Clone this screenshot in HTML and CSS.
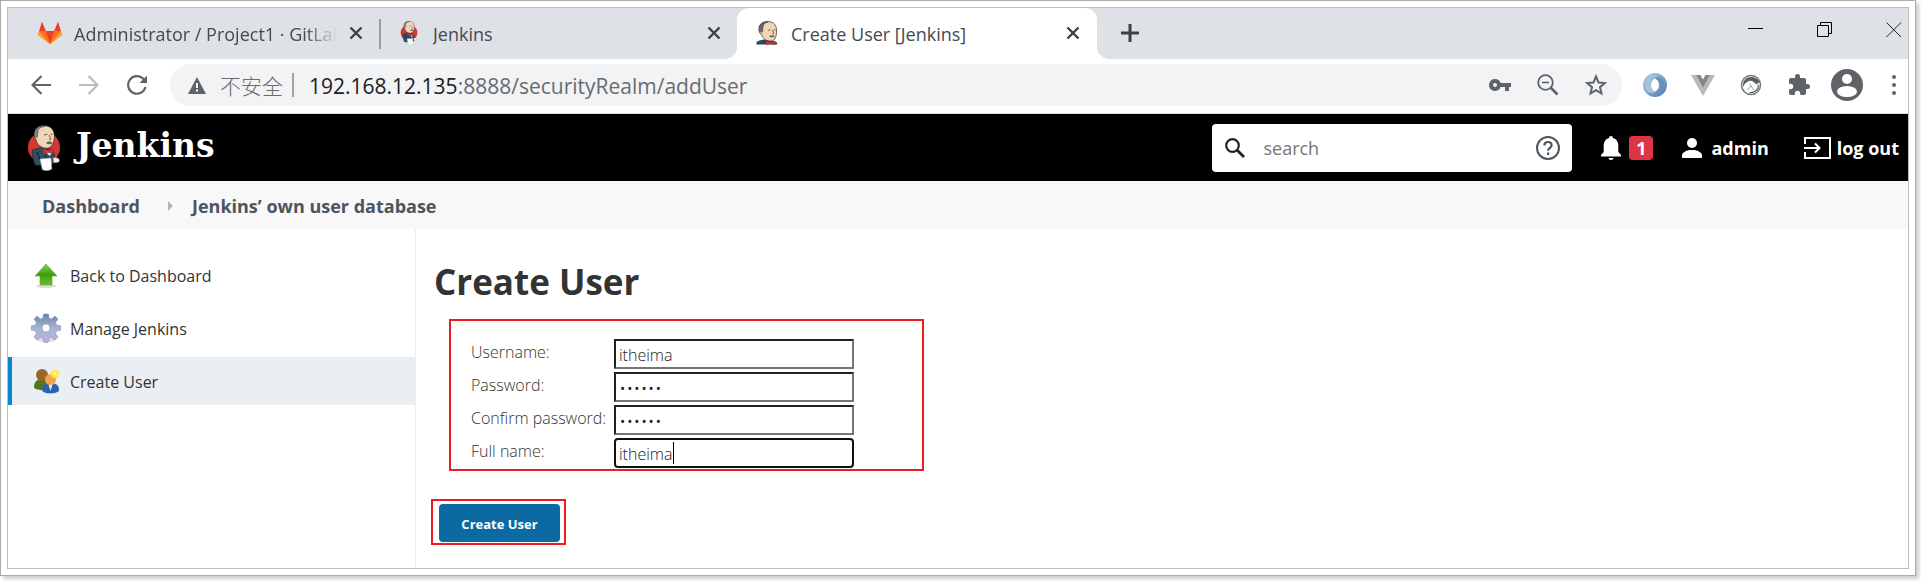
FILE: index.html
```html
<!DOCTYPE html>
<html lang="en">
<head>
<meta charset="utf-8">
<title>Create User [Jenkins]</title>
<link rel="stylesheet" href="styles.css">
</head>
<body>
<svg class="defs" aria-hidden="true">
  <defs>
    <symbol id="butler-head" viewBox="0 0 22 24">
      <path d="M0.500 23.500V21l3-1.500 4-1 8 1 5 1.500 1 2.500z" fill="#24485c"/>
      <path d="M4 11C2 4 5 .8 12 .6c6 0 9 4 8.600 10.400-.2 4.500-1.600 8.500-5.100 9C11 20.400 7 18 5.500 13.500z" fill="#f0d6b7" stroke="#463f3d" stroke-width=".8"/>
      <path d="M5 13C2.500 11 2 7 4.200 4 6 1.500 9 .8 12 .9 8.500 1.600 7.200 3.500 7 6L6.500 10z" fill="#696467" stroke="#3a3536" stroke-width=".6"/>
      <path d="M5.500 10.500c-2-.5-2 2.500 0 3.300" fill="#f0d6b7" stroke="#463f3d" stroke-width=".6"/>
      <path d="M12 9.300l2.500-.4M18 8.800l1.600.2M16.500 9l1.300 3.500-1.500.5" fill="none" stroke="#51443d" stroke-width=".8"/>
      <path d="M13 15.500c1.800-1.600 4-1.600 6-.4-1.500 1.400-3.500 1.800-6 .4z" fill="#6f6055"/>
      <path d="M10 20l4 1.200L18.500 20v3.800l-4-1-4.500 1z" fill="#d33833" stroke="#8d1e20" stroke-width=".4"/>
    </symbol>
    <symbol id="butler" viewBox="0 0 32 46">
      <ellipse cx="16" cy="22.500" rx="16" ry="15.500" fill="#d33833"/>
      <path d="M7 40C5 34 3.500 28 4.500 25l8-2.500 11 2 3 4-1 10-11 2z" fill="#2e4f62" stroke="#12232e" stroke-width=".6"/>
      <path d="M7 12C5.500 5 9.500 .8 16.500 .8c7 0 10.400 5 9.800 12-.3 6-3 10-7.500 10.400C13 23.500 9 19 8 15z" fill="#f0d6b7" stroke="#382f2d" stroke-width=".7"/>
      <path d="M8 14C5 11 6 4 10 2c2.500-1.300 5-1.400 7-.8-4.500.6-7 2.500-7.200 5.500L9.500 11z" fill="#85858a" stroke="#353235" stroke-width=".6"/>
      <path d="M8.500 11.500c-2-.4-1.500 3.600.4 4.300" fill="#f0d6b7" stroke="#382f2d" stroke-width=".6"/>
      <path d="M16 10l3.500-.8M22.500 9.200l2 .2M21 10l2 4-1.800.7" fill="none" stroke="#4b403b" stroke-width=".8"/>
      <path d="M18 18c1.600-2 5-2 6.800 0-1.500 1.600-4.800 2-6.800 0z" fill="#6c5c51"/>
      <path d="M18 27l3.500 4 2.500-3z" fill="#dce5e9"/>
      <path d="M15 23.500l5.500 2 4.500-2 .4 5-4.900-1.200L15.500 29z" fill="#d33833" stroke="#941b20" stroke-width=".5"/>
      <path d="M16 30l6 5M9 27l3 8" fill="none" stroke="#0e202b" stroke-width="1"/>
      <path d="M12 34l11-1 .8 11c-3 2-7.500 2-9.500.5z" fill="#fff" stroke="#9aa5aa" stroke-width=".5"/>
      <path d="M25 33c3-1 6 0 6.500 2 .4 2-2 3.500-6 2.500z" fill="#f2efed" stroke="#6b6461" stroke-width=".5"/>
    </symbol>
    <symbol id="close" viewBox="0 0 14 14"><path d="M1.500 1.500l11 11M12.500 1.500l-11 11" fill="none" stroke="#3c4043" stroke-width="2.400"/></symbol>
    <linearGradient id="green" x1="0" y1="0" x2="0" y2="1"><stop offset="0" stop-color="#8fd05c"/><stop offset=".5" stop-color="#3f9d0a"/><stop offset="1" stop-color="#67bf2b"/></linearGradient>
    <linearGradient id="gear" x1="0" y1="0" x2="0" y2="1"><stop offset="0" stop-color="#6683ad"/><stop offset=".5" stop-color="#a9b3d3"/><stop offset="1" stop-color="#b7b3d4"/></linearGradient>
    <linearGradient id="ring" x1="0" y1="0" x2="1" y2="1"><stop offset="0" stop-color="#b6cce4"/><stop offset="1" stop-color="#4a7db0"/></linearGradient>
    <radialGradient id="glow"><stop offset="0" stop-color="#fffbb0"/><stop offset=".5" stop-color="#ffe92e"/><stop offset="1" stop-color="#ffe92e" stop-opacity="0"/></radialGradient>
  </defs>
</svg>
<div class="frame">
  <div class="window">
    <div class="tabs">
      <div class="tab tab-first">
        <svg class="favicon" viewBox="0 0 24 22"><path d="M12 22L0 13 4 0l4 9h8l4-9 4 13z" fill="#fc6d26"/><path d="M12 22L7.500 9h9z" fill="#e24329"/><path d="M4 0l3.500 9H1.200zM20 0l-3.500 9h6.300z" fill="#e24329"/><path d="M1.200 9L0 13l12 9zM22.800 9L24 13l-12 9z" fill="#fca326"/><path d="M1.200 9h6.300L12 22zM22.800 9h-6.300L12 22z" fill="#fc6d26"/></svg>
        <span class="tab-title fade">Administrator / Project1 · GitLab</span>
        <button class="icon-btn" aria-label="Close tab"><svg class="s14"><use href="#close"/></svg></button>
      </div>
      <div class="tab tab-second">
        <svg class="favicon"><use href="#butler"/></svg>
        <span class="tab-title">Jenkins</span>
        <button class="icon-btn" aria-label="Close tab"><svg class="s14"><use href="#close"/></svg></button>
      </div>
      <div class="tab tab-active">
        <svg class="favicon"><use href="#butler-head"/></svg>
        <span class="tab-title">Create User [Jenkins]</span>
        <button class="icon-btn" aria-label="Close tab"><svg class="s14"><use href="#close"/></svg></button>
      </div>
      <button class="icon-btn new-tab" aria-label="New tab"><svg class="s18" viewBox="0 0 18 18"><path d="M9 0v18M0 9h18" stroke="#3c4043" stroke-width="3"/></svg></button>
      <div class="controls">
        <button class="icon-btn" aria-label="Minimize"><svg class="s16" viewBox="0 0 16 16"><path d="M0 6.500h15" stroke="#000"/></svg></button>
        <button class="icon-btn" aria-label="Restore"><svg class="s16" viewBox="0 0 16 16"><path d="M.5 3.500h11v11H.5zM3.500 3.500v-3h11v11h-3" fill="none" stroke="#000"/></svg></button>
        <button class="icon-btn" aria-label="Close window"><svg class="s16" viewBox="0 0 16 16"><path d="M.5.5l14.500 14.500M15 .5L.5 15" stroke="#222"/></svg></button>
      </div>
    </div>

    <div class="toolbar">
      <div class="nav">
        <button class="icon-btn" aria-label="Back"><svg class="s20" viewBox="0 0 20 20"><path d="M20 10H2M10.500 1L1.500 10l9 9" fill="none" stroke="#5f6368" stroke-width="2.200"/></svg></button>
        <button class="icon-btn" aria-label="Forward"><svg class="s20" viewBox="0 0 20 20"><path d="M0 10h18M9.500 1l9 9-9 9" fill="none" stroke="#babcbe" stroke-width="2.200"/></svg></button>
        <button class="icon-btn" aria-label="Reload"><svg class="s20" viewBox="0 0 20 20"><path d="M18.500 12A8.800 8.800 0 1 1 16 3.500l1.500 1.700" fill="none" stroke="#5f6368" stroke-width="2.200"/><path d="M20 .5V8h-7.500z" fill="#5f6368"/></svg></button>
      </div>
      <div class="omnibox">
        <svg class="warn" viewBox="0 0 18 17"><path d="M9 0l9 17H0z" fill="#5f6368"/><path d="M9 6v5M9 12.500v2" stroke="#fff" stroke-width="2"/></svg>
        <span class="insecure">不安全</span>
        <span class="url"><b>192.168.12.135</b>:8888/securityRealm/addUser</span>
        <div class="omni-icons">
          <svg class="s22" viewBox="0 0 22 22"><path d="M6 5a6 6 0 1 0 5.600 8H16v4h4v-4h2V9H11.600A6 6 0 0 0 6 5zm0 4a2 2 0 1 1 0 4 2 2 0 0 1 0-4z" fill="#5f6368" fill-rule="evenodd"/></svg>
          <svg class="s22" viewBox="0 0 22 22"><circle cx="8.500" cy="8.500" r="7.300" fill="none" stroke="#5f6368" stroke-width="1.800"/><path d="M5 8.500h7" stroke="#5f6368" stroke-width="1.600"/><path d="M13.500 13.500l7 7" stroke="#5f6368" stroke-width="2.600"/></svg>
          <svg class="s22" viewBox="0 0 22 22"><path d="M11 2.500l2.500 6 6.400.5-4.900 4.200 1.500 6.300-5.500-3.400-5.500 3.400L7 13.200 2.100 9l6.400-.5z" fill="none" stroke="#5f6368" stroke-width="2"/></svg>
        </div>
      </div>
      <div class="extensions">
        <svg class="s24" viewBox="0 0 24 24"><path d="M12 0a12 12 0 1 0 0 24 12 12 0 0 0 0-24zm0 5.500c3 1 4 3.500 4 6.500s-1.500 5.500-4 6.500c-3-1-4-3.500-4-6.500s1.500-5.500 4-6.500z" fill="url(#ring)" fill-rule="evenodd"/><path d="M4 18C-1 9 6 1 14 1.500 8 4 6 8 8 14c1 3 3 4.500 5 4.500-3 2-6 2-9-.5z" fill="#a9c2dc"/><path d="M20 6c4 8-2 16-10 16.500 6-2.500 8-6.500 6-12.500-1-3-3-4-4-4.500 2-1.500 5-1.500 8 .5z" fill="#6391c0"/></svg>
        <svg class="s24" viewBox="0 0 24 24"><path d="M0 2h5l7 12 7-12h5L12 23z" fill="#b9b9b9"/><path d="M5 2h4.500L12 6.500 14.500 2H19l-7 12.500z" fill="#868686"/></svg>
        <svg class="s24" viewBox="0 0 24 24"><circle cx="12" cy="12" r="9.500" fill="#fff" stroke="#757b79" stroke-width="1.600"/><path d="M4 14C3 7 9 2.500 15 4.500c3 1 5.500 3 6 5.500l-2.500-.5.500 2-3-1c-2-3-5-3.500-8-1.500-2 1.300-3 3-4 5z" fill="#59605e"/><path d="M8.500 17l3.500-4-1-2M12 13l3 4" fill="none" stroke="#9aa09e"/><path d="M19.500 12c0 5-4 8-9 7.500" fill="none" stroke="#59605e" stroke-width="1.200"/></svg>
        <svg class="s24" viewBox="0 0 24 24"><path d="M20.500 11H19V7c0-1.100-.9-2-2-2h-4V3.500a2.500 2.500 0 0 0-5 0V5H4c-1.100 0-2 .9-2 2v3.800h1.500a2.700 2.700 0 0 1 0 5.400H2V20c0 1.100.9 2 2 2h3.800v-1.500a2.700 2.700 0 0 1 5.400 0V22H17c1.100 0 2-.9 2-2v-4h1.500a2.500 2.500 0 0 0 0-5z" fill="#5f6368"/></svg>
      </div>
      <svg class="avatar" viewBox="0 0 32 32"><circle cx="16" cy="16" r="16" fill="#5f6368"/><circle cx="16" cy="10" r="5" fill="#fff"/><ellipse cx="16" cy="22.500" rx="10" ry="5.500" fill="#fff"/></svg>
      <button class="icon-btn" aria-label="Menu"><svg class="dots" viewBox="0 0 4 20"><circle cx="2" cy="2" r="2"/><circle cx="2" cy="10" r="2"/><circle cx="2" cy="18" r="2"/></svg></button>
    </div>

    <header class="header">
      <a class="brand" href="#"><svg class="logo"><use href="#butler"/></svg><span class="brand-name">Jenkins</span></a>
      <div class="search">
        <svg class="s20" viewBox="0 0 20 20"><circle cx="7.500" cy="7.500" r="6.300" fill="none" stroke="#222" stroke-width="2.200"/><path d="M12 12l7 7" stroke="#222" stroke-width="2.800"/></svg>
        <input type="text" placeholder="search" aria-label="search">
        <svg class="s24" viewBox="0 0 24 24"><circle cx="12" cy="12" r="11" fill="none" stroke="#4d545d" stroke-width="2"/><path d="M8.400 9.500C8.400 7.300 10 6 12 6s3.600 1.300 3.600 3.300c0 2.500-3.500 2.700-3.500 5.500M12.100 16.500v2.500" fill="none" stroke="#4d545d" stroke-width="2.200"/></svg>
      </div>
      <a class="alerts" href="#" aria-label="1 notification">
        <svg class="bell" viewBox="0 0 20 24"><path d="M10 0c1.300 0 2 .9 2 2 3.500 1 5.300 4 5.300 7.500V16l2.700 3v1.500H0V19l2.700-3V9.500C2.700 6 4.500 3 8 2c0-1.100.7-2 2-2zM7.500 22h5c0 1.200-1.100 2-2.500 2s-2.500-.8-2.500-2z" fill="#fff"/></svg>
        <span class="badge">1</span>
      </a>
      <a class="user" href="#"><svg class="s20" viewBox="0 0 20 20"><circle cx="10" cy="5" r="5" fill="#fff"/><path d="M0 20v-2.500C0 14 5 12 10 12s10 2 10 5.500V20z" fill="#fff"/></svg><span>admin</span></a>
      <a class="logout" href="#"><svg class="exit" viewBox="0 0 27 22"><path d="M1 7V1h25v20H1v-6M0 11h15M11 6.500l4.500 4.500-4.500 4.500" fill="none" stroke="#fff" stroke-width="2"/></svg><span>log out</span></a>
    </header>

    <nav class="crumbs">
      <a href="#">Dashboard</a>
      <svg class="arrow" viewBox="0 0 5 10"><path d="M0 0l5 5-5 5z" fill="#b5b5b5"/></svg>
      <a href="#">Jenkins’ own user database</a>
    </nav>

    <div class="page">
      <nav class="side">
        <a href="#"><svg class="s30" viewBox="0 0 30 30"><ellipse cx="15" cy="26" rx="10" ry="2" fill="#ddd"/><path d="M15 4l11 12h-5v9H9v-9H4z" fill="url(#green)" stroke="#63a53c" stroke-width=".6"/></svg><span>Back to Dashboard</span></a>
        <a href="#"><svg class="s30" viewBox="0 0 30 30"><ellipse cx="15" cy="27" rx="9" ry="2" fill="#ddd"/><path d="M12.500 1h5l.5 4 2.500 1L24 3l3 3-2.500 3.500 1 2.500 4.500 1v4l-4.500 1-1 2.500L27 24l-3 3-3.500-2.500L18 25.500l-1 4h-4l-1-4-2.500-1L6 27l-3-3 2.500-3.500-1-2.500L0 17v-4l4.500-1 1-2.500L3 6l3-3 3.500 3L12 5zM15 11a4 4 0 1 0 0 8 4 4 0 0 0 0-8z" fill="url(#gear)" stroke="#8793b5" stroke-width=".6" fill-rule="evenodd"/></svg><span>Manage Jenkins</span></a>
        <a href="#" class="current"><svg class="s30" viewBox="0 0 30 30"><path d="M3 21c0-5 3-8 8-8s8 3 8 8c0 4-16 4-16 0z" fill="#55761f"/><circle cx="11" cy="9" r="6" fill="#9a6629"/><path d="M11 24c0-5 3-7 8.500-7s8.500 2 8.500 7c0 4.500-17 4.500-17 0z" fill="#2c63ad"/><path d="M17 17h5l-2.500 8z" fill="#e6edf6"/><circle cx="19.500" cy="13.500" r="5.500" fill="#f0a54c"/><circle cx="24" cy="8" r="5.500" fill="url(#glow)"/></svg><span>Create User</span></a>
      </nav>
      <main class="main">
        <h1>Create User</h1>
        <form>
          <div class="fields">
            <label for="u">Username:</label><input id="u" type="text" value="itheima">
            <label for="p">Password:</label><input id="p" type="password" value="123456">
            <label for="c">Confirm password:</label><input id="c" type="password" value="123456">
            <label for="f">Full name:</label><div class="active-field"><input id="f" type="text" value="itheima"><span class="caret"></span></div>
          </div>
          <div class="submit"><button type="submit">Create User</button></div>
        </form>
      </main>
    </div>
  </div>
</div>
</body>
</html>
```
FILE: styles.css
```css
* { box-sizing: border-box; }
body {
  margin: 0;
  min-height: 100vh;
  display: flex;
  flex-direction: column;
  background: #fff;
  color: #333;
  font-family: "Open Sans", "Noto Sans CJK SC", sans-serif;
  font-size: 16px;
}
svg { display: block; flex: none; }
a { color: inherit; text-decoration: none; }
.defs { position: absolute; width: 0; height: 0; }
.s14 { width: 14px; height: 14px; }
.s16 { width: 16px; height: 16px; }
.s18 { width: 18px; height: 18px; }
.s20 { width: 20px; height: 20px; }
.s22 { width: 22px; height: 22px; }
.s24 { width: 24px; height: 24px; }
.s30 { width: 30px; height: 30px; }
.icon-btn { flex: none; padding: 0; border: 0; background: none; }

.frame {
  flex: 1;
  display: flex;
  margin: 0 5px 5px 0;
  padding: 6px;
  border: 1px solid #aaa;
  background: #fff;
  box-shadow: 3px 3px 4px #ccc;
}
.window {
  flex: 1;
  min-width: 0;
  display: flex;
  flex-direction: column;
  border: 1px solid #bbb;
}

.tabs { display: flex; height: 51px; background: #dee1e6; font-size: 18px; color: #45494d; }
.tab { position: relative; display: flex; align-items: center; min-width: 0; padding-bottom: 2px; }
.tab-first { flex: 0 1 371px; padding-left: 30px; padding-right: 16px; }
.tab-first::after {
  content: "";
  position: absolute;
  right: -2px;
  top: 11px;
  width: 2px;
  height: 30px;
  background: #999da1;
}
.tab-second { flex: 0 1 358px; padding: 0 16px 2px 18px; }
.tab-active { flex: 0 1 360px; padding: 0 17px 2px 18px; background: #fff; border-radius: 12px 12px 0 0; }
.tab-active::before, .tab-active::after {
  content: "";
  position: absolute;
  bottom: 0;
  width: 12px;
  height: 12px;
}
.tab-active::before { left: -12px; background: radial-gradient(circle at 0 0, #dee1e6 12px, #fff 12px); }
.tab-active::after { right: -12px; background: radial-gradient(circle at 100% 0, #dee1e6 12px, #fff 12px); }
.favicon { width: 24px; height: 24px; margin-right: 12px; }
.tab-title { flex: 1; overflow: hidden; white-space: nowrap; margin-right: 12px; padding-top: 2px; }
.fade { -webkit-mask-image: linear-gradient(90deg, #000 88%, transparent); mask-image: linear-gradient(90deg, #000 88%, transparent); }
.new-tab { margin-left: 24px; padding-bottom: 2px; }
.controls { display: flex; gap: 53px; margin-left: auto; margin-right: 6px; padding-top: 14px; align-items: flex-start; }

.toolbar { display: flex; align-items: center; height: 55px; padding: 0 12px 2px 23px; border-bottom: 1px solid #dadce0; }
.nav { display: flex; gap: 28px; margin-right: 23px; }
.omnibox { flex: 1; min-width: 0; display: flex; align-items: center; height: 42px; padding: 0 15px 0 18px; border-radius: 21px; background: #f1f3f4; font-size: 21px; color: #696c70; }
.warn { width: 18px; height: 17px; margin-right: 14px; }
.insecure { padding-right: 9px; border-right: 2px solid #a0a3a6; line-height: 24px; margin-right: 15px; white-space: nowrap; font-family: "Noto Sans CJK SC", sans-serif; font-weight: 300; }
.url { flex: 1; overflow: hidden; white-space: nowrap; padding-top: 2px; }
.url b { color: #202124; font-weight: 400; }
.omni-icons { display: flex; gap: 26px; }
.extensions { display: flex; gap: 24px; margin: 0 20px 0 21px; }
.avatar { width: 32px; height: 32px; margin-right: 29px; }
.dots { width: 4px; height: 20px; fill: #5f6368; }

.header { display: flex; align-items: center; height: 67px; padding: 0 9px 0 20px; background: #000; color: #fff; font-size: 18px; font-weight: 700; }
.brand { display: flex; align-items: center; gap: 16px; margin-right: auto; font-family: "DejaVu Serif", serif; font-size: 33px; }
.brand-name { padding-bottom: 4px; }
.logo { width: 32px; height: 46px; }
.search { flex: 0 1 360px; display: flex; align-items: center; height: 48px; padding: 0 12px 0 13px; border-radius: 4px; background: #fff; }
.search input { flex: 1; min-width: 0; border: 0; padding: 0 18px; background: none; font: 400 18px "Open Sans", sans-serif; color: #333; }
.search input::placeholder { color: #757575; }
.alerts { display: flex; align-items: center; gap: 8px; margin-left: 29px; }
.bell { width: 20px; height: 24px; }
.badge { width: 24px; line-height: 24px; text-align: center; border-radius: 4px; background: #dc3545; }
.user { display: flex; align-items: center; gap: 9px; margin-left: 29px; }
.logout { display: flex; align-items: center; gap: 6px; margin-left: 35px; white-space: nowrap; }
.exit { width: 27px; height: 22px; }

.crumbs { display: flex; align-items: center; height: 48px; padding: 2px 34px 0; background: #f8f8f8; color: #4d545d; font-size: 18px; font-weight: 700; }
.arrow { width: 5px; height: 10px; margin: 0 19px 0 28px; }

.page { flex: 1; display: flex; }
.side { flex: none; width: 408px; padding-top: 22px; display: flex; flex-direction: column; gap: 5px; border-right: 1px solid #eee; }
.side a { display: flex; align-items: center; gap: 9px; height: 48px; padding-left: 19px; border-left: 4px solid transparent; font-weight: 500; }
.side span { padding-top: 1px; }
.side .current { border-color: #0b84d4; background: #e9eff2; }
.main { flex: 1; min-width: 0; padding: 29px 15px 23px; }
h1 { margin: 0 0 13px 3px; font-size: 35px; line-height: 48px; }
.fields {
  display: grid;
  grid-template-columns: 143px 240px;
  grid-auto-rows: 30px;
  row-gap: 3px;
  align-items: start;
  width: 475px;
  margin-left: 18px;
  padding: 18px 20px 1px;
  border: 2px solid #ed1c24;
}
.fields label { line-height: 26px; white-space: nowrap; font-weight: 300; }
.fields input { width: 100%; height: 30px; padding: 2px 3px 0; border: 2px inset #767676; background: #fff; color: #222; font: 300 16px "Open Sans", sans-serif; }
.fields input[type="password"] { font-size: 19px; }
.active-field { position: relative; }
.fields .active-field input { border: 2px solid #101010; border-radius: 4px; }
.caret { position: absolute; left: 59px; top: 4px; width: 1px; height: 22px; background: #000; }
.submit { width: 135px; margin-top: 28px; padding: 3px 4px 1px 6px; border: 2px solid #ed1c24; }
.submit button { width: 100%; height: 38px; padding: 2px 0 0; border: 0; border-radius: 4px; background: #0b6aa2; color: #fff; font: 700 13px "Open Sans", sans-serif; }
```
